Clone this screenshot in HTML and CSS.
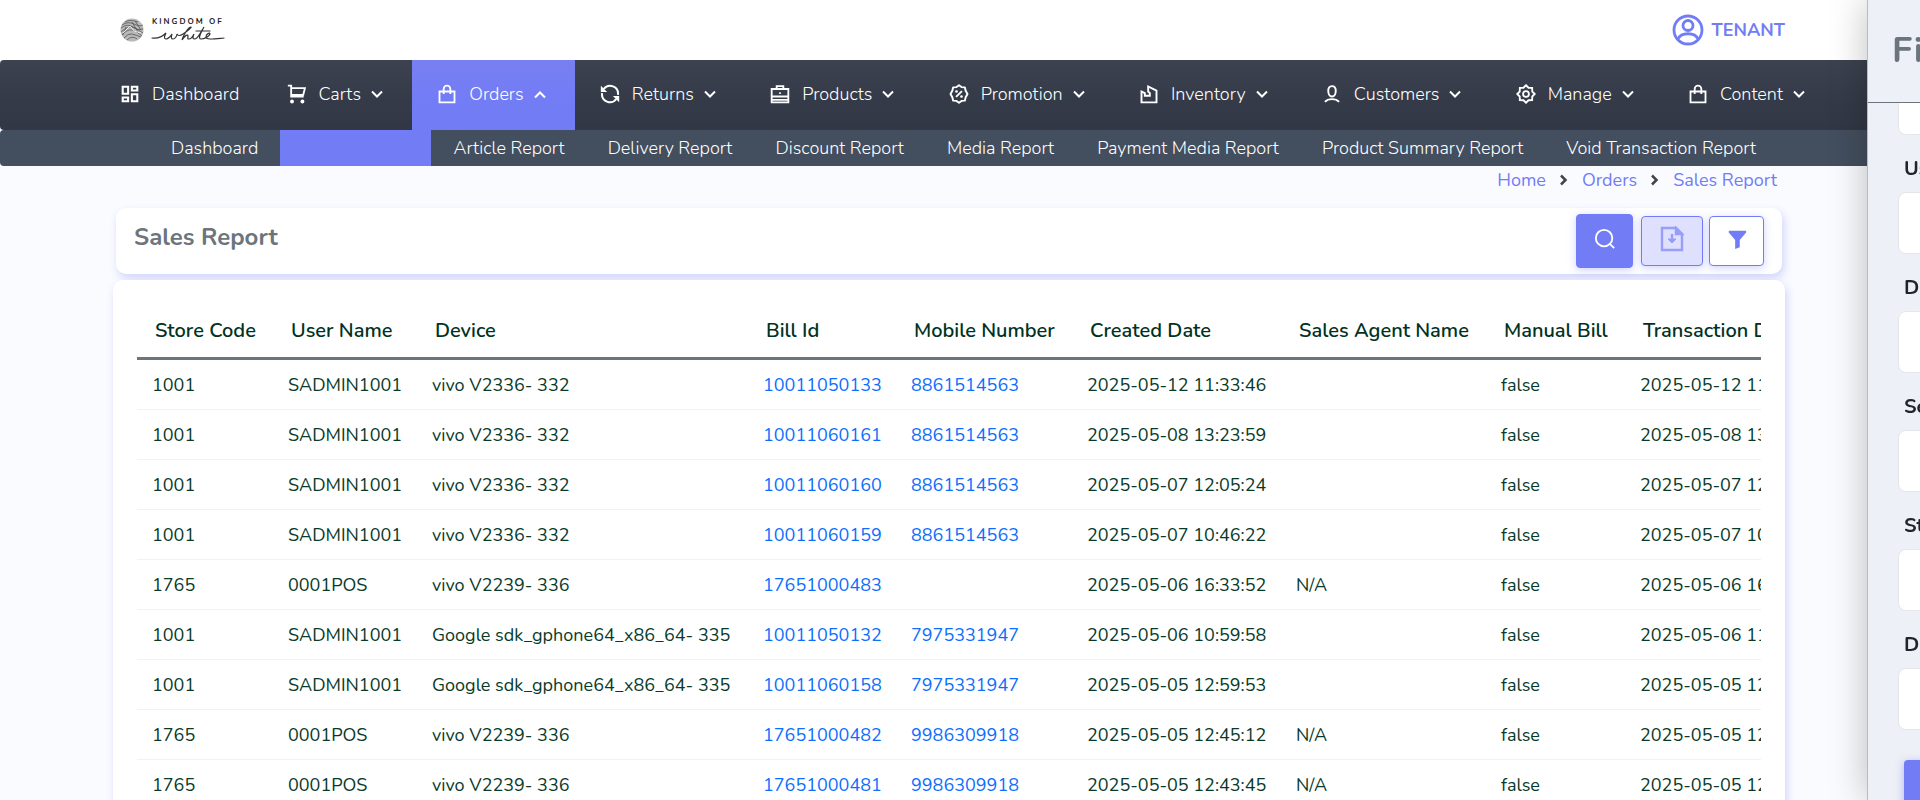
FILE: index.html
```html
<!DOCTYPE html>
<html lang="en">
<head>
<meta charset="utf-8">
<title>Sales Report</title>
<link rel="stylesheet" href="styles.css">
</head>
<body>
<svg class="sprite" aria-hidden="true">
  <symbol id="dash" viewBox="0 0 24 24"><path d="M2 2h9v11H2zM4.500 4.500v6h4v-6zM13 2h9v7h-9zM15.500 4.500v2h4v-2zM13 11h9v11h-9zM15.500 13.500v6h4v-6zM2 15h9v7H2zM4.500 17.500v2h4v-2z" fill="currentColor" fill-rule="evenodd"/></symbol>
  <symbol id="cart" viewBox="0 0 24 24"><path d="M1 2h4v13h15M5 5h16.500l-2 8H5" fill="none" stroke="currentColor" stroke-width="2.200"/><circle cx="6" cy="21" r="2.300" fill="currentColor"/><circle cx="18.500" cy="21" r="2.300" fill="currentColor"/></symbol>
  <symbol id="bag" viewBox="0 0 24 24"><path d="M3 9h18v13H3zM8 12V6a4 4 0 0 1 8 0v6" fill="none" stroke="currentColor" stroke-width="2.200"/></symbol>
  <symbol id="refresh" viewBox="0 0 24 24"><path d="M4.500 6a9.500 9.500 0 0 1 17 7M19.500 18a9.500 9.500 0 0 1-17-7" fill="none" stroke="currentColor" stroke-width="2.400"/><path d="M1 2v7.500h7.500zM23 22v-7.500h-7.500z" fill="currentColor"/></symbol>
  <symbol id="case" viewBox="0 0 24 24"><path d="M2 6h20v16H2zM8 6V2.500h8V6M2 15h20M2 19h20" fill="none" stroke="currentColor" stroke-width="2.200"/><path d="M11 10h2v2h-2z" fill="currentColor"/></symbol>
  <symbol id="promo" viewBox="0 0 24 24"><path d="M12 1.500l3 2.200 4 .3 1 4 2.200 4-2.200 4-1 4-4 .3-3 2.200-3-2.200-4-.3-1-4-2.200-4L4 8l1-4 4-.3zM8.500 15.500l7-7" fill="none" stroke="currentColor" stroke-width="2.300" stroke-linejoin="round"/><circle cx="9" cy="9" r="1.600" fill="currentColor"/><circle cx="15" cy="15" r="1.600" fill="currentColor"/></symbol>
  <symbol id="stock" viewBox="0 0 24 24"><path d="M3 22V9l4 2v3h6v-3l-2-2V3l10 5v14z" fill="none" stroke="currentColor" stroke-width="2.300"/></symbol>
  <symbol id="person" viewBox="0 0 24 24"><path d="M12 2.500c3 0 4.500 2 4.500 5.500S15 15 12 15s-4.500-3.500-4.500-7S9 2.500 12 2.500zM3.500 21.500c4-4.500 13-4.500 17 0" fill="none" stroke="currentColor" stroke-width="2.300"/></symbol>
  <symbol id="gear" viewBox="0 0 24 24"><path d="M12 1.500l3 3 4.400.1.100 4.400 3 3-3 3-.1 4.400-4.400.1-3 3-3-3-4.400-.1-.1-4.400-3-3 3-3 .1-4.400L9 4.500z" fill="none" stroke="currentColor" stroke-width="2.200"/><circle cx="12" cy="12" r="3.500" fill="none" stroke="currentColor" stroke-width="2.200"/></symbol>
  <symbol id="down" viewBox="0 0 12 12"><path d="M1 3.500l5 5 5-5" fill="none" stroke="currentColor" stroke-width="2"/></symbol>
  <symbol id="up" viewBox="0 0 12 12"><path d="M1 9.500l5-5 5 5" fill="none" stroke="currentColor" stroke-width="2"/></symbol>
  <symbol id="next" viewBox="0 0 12 12"><path d="M3 1.500L7.500 6 3 10.500" fill="none" stroke="currentColor" stroke-width="2.500"/></symbol>
</svg>

<header class="topbar">
  <a class="brand" href="#" aria-label="Kingdom of White">
    <svg class="brand-mark" viewBox="0 0 24 24" fill="none"><circle cx="12" cy="12" r="11.500" fill="#b9b9b9"/><g stroke="#555" stroke-width=".8"><path d="M2 7q6-4 12-1t9 1M1 10q7-5 12-1t10 2M1 14q7-6 11-5t11 6M2 17q5-6 10-5t10 6M4 20q4-5 8-4t9 3M7 22q5-5 10-1M5 4q5-3 13 0M6 9l-3 8M12 4l6 10M15 3l6 9"/></g><path d="M3 15l7-7 4 5 7 2" stroke="#eee"/></svg>
    <span class="brand-text"><span class="brand-top">KINGDOM OF</span>
    <svg class="brand-script" viewBox="0 0 76 16" fill="none" stroke="#333" stroke-width="1.200" stroke-linecap="round"><path d="M1 12c6 1 10-1 14-5-2 4-2 6 0 6s5-3 6-5c-1 3-1 5 1 5s4-3 4-5c1 2 3 2 6 0 5-3 9-7 8-7-3 0-8 9-9 13 3-5 6-6 6-4s-1 3 1 3 4-3 5-5c-2 4-1 5 1 5 3 0 7-9 9-12-4 7-6 12-3 12 3 0 8-2 9-5 0-2-4 0-4 3s7 2 18 1M45 5h14"/></svg></span>
  </a>
  <a class="account" href="#">
    <svg class="account-icon" viewBox="0 0 32 32" fill="none" stroke="currentColor" stroke-width="2.800"><circle cx="16" cy="16" r="14"/><circle cx="16" cy="11.500" r="5"/><path d="M6 25c3-7 17-7 20 0"/></svg>
    TENANT
  </a>
</header>

<nav class="mainnav" aria-label="Main">
  <a class="nav-item" href="#"><svg class="icon"><use href="#dash"/></svg>Dashboard</a>
  <a class="nav-item" href="#"><svg class="icon"><use href="#cart"/></svg>Carts<svg class="chev"><use href="#down"/></svg></a>
  <a class="nav-item active" href="#"><svg class="icon"><use href="#bag"/></svg>Orders<svg class="chev"><use href="#up"/></svg></a>
  <a class="nav-item" href="#"><svg class="icon"><use href="#refresh"/></svg>Returns<svg class="chev"><use href="#down"/></svg></a>
  <a class="nav-item" href="#"><svg class="icon"><use href="#case"/></svg>Products<svg class="chev"><use href="#down"/></svg></a>
  <a class="nav-item" href="#"><svg class="icon"><use href="#promo"/></svg>Promotion<svg class="chev"><use href="#down"/></svg></a>
  <a class="nav-item" href="#"><svg class="icon"><use href="#stock"/></svg>Inventory<svg class="chev"><use href="#down"/></svg></a>
  <a class="nav-item" href="#"><svg class="icon"><use href="#person"/></svg>Customers<svg class="chev"><use href="#down"/></svg></a>
  <a class="nav-item" href="#"><svg class="icon"><use href="#gear"/></svg>Manage<svg class="chev"><use href="#down"/></svg></a>
  <a class="nav-item" href="#"><svg class="icon"><use href="#bag"/></svg>Content<svg class="chev"><use href="#down"/></svg></a>
</nav>
<nav class="subnav" aria-label="Orders">
  <a class="sub-item" href="#">Dashboard</a>
  <a class="sub-item current" href="#" aria-label="Sales Report"></a>
  <a class="sub-item" href="#">Article Report</a>
  <a class="sub-item" href="#">Delivery Report</a>
  <a class="sub-item" href="#">Discount Report</a>
  <a class="sub-item" href="#">Media Report</a>
  <a class="sub-item" href="#">Payment Media Report</a>
  <a class="sub-item" href="#">Product Summary Report</a>
  <a class="sub-item" href="#">Void Transaction Report</a>
</nav>

<main class="page">
  <nav class="crumbs" aria-label="Breadcrumb">
    <a href="#">Home</a><svg class="sep"><use href="#next"/></svg>
    <a href="#">Orders</a><svg class="sep"><use href="#next"/></svg>
    <a href="#">Sales Report</a>
  </nav>

  <section class="titlebar">
    <h1>Sales Report</h1>
    <div class="actions">
      <button class="btn primary" aria-label="Search"><svg class="btn-icon" viewBox="0 0 24 24" fill="none" stroke="currentColor" stroke-width="2"><circle cx="11" cy="11" r="9"/><path d="M17 17l5 5"/></svg></button>
      <button class="btn export" disabled aria-label="Export"><svg class="btn-icon large" viewBox="0 0 24 26" fill="none" stroke="currentColor" stroke-width="2.400"><path d="M2 2h14l6 6v16H2z"/><path d="M16 2l6 6h-6z" fill="currentColor"/><path d="M12 8v6"/><path d="M8 13h8l-4 4z" fill="currentColor" stroke-width="1"/></svg></button>
      <button class="btn" aria-label="Filter"><svg class="btn-icon" viewBox="0 0 24 24" fill="currentColor"><path d="M3 3h19v2l-7 8v8l-5 2V13L3 5z"/></svg></button>
    </div>
  </section>

  <section class="report">
    <div class="table-wrap">
      <table>
        <colgroup><col class="c-store"><col class="c-user"><col class="c-device"><col class="c-bill"><col class="c-mobile"><col class="c-created"><col class="c-agent"><col class="c-manual"><col class="c-date"></colgroup>
        <thead><tr><th>Store Code</th><th>User Name</th><th>Device</th><th>Bill Id</th><th>Mobile Number</th><th>Created Date</th><th>Sales Agent Name</th><th>Manual Bill</th><th>Transaction Date</th></tr></thead>
        <tbody>
          <tr><td>1001</td><td>SADMIN1001</td><td>vivo V2336- 332</td><td><a href="#">10011050133</a></td><td><a href="#">8861514563</a></td><td>2025-05-12 11:33:46</td><td></td><td>false</td><td>2025-05-12 11:33:46</td></tr>
          <tr><td>1001</td><td>SADMIN1001</td><td>vivo V2336- 332</td><td><a href="#">10011060161</a></td><td><a href="#">8861514563</a></td><td>2025-05-08 13:23:59</td><td></td><td>false</td><td>2025-05-08 13:23:59</td></tr>
          <tr><td>1001</td><td>SADMIN1001</td><td>vivo V2336- 332</td><td><a href="#">10011060160</a></td><td><a href="#">8861514563</a></td><td>2025-05-07 12:05:24</td><td></td><td>false</td><td>2025-05-07 12:05:24</td></tr>
          <tr><td>1001</td><td>SADMIN1001</td><td>vivo V2336- 332</td><td><a href="#">10011060159</a></td><td><a href="#">8861514563</a></td><td>2025-05-07 10:46:22</td><td></td><td>false</td><td>2025-05-07 10:46:22</td></tr>
          <tr><td>1765</td><td>0001POS</td><td>vivo V2239- 336</td><td><a href="#">17651000483</a></td><td></td><td>2025-05-06 16:33:52</td><td>N/A</td><td>false</td><td>2025-05-06 16:33:52</td></tr>
          <tr><td>1001</td><td>SADMIN1001</td><td>Google sdk_gphone64_x86_64- 335</td><td><a href="#">10011050132</a></td><td><a href="#">7975331947</a></td><td>2025-05-06 10:59:58</td><td></td><td>false</td><td>2025-05-06 11:00:02</td></tr>
          <tr><td>1001</td><td>SADMIN1001</td><td>Google sdk_gphone64_x86_64- 335</td><td><a href="#">10011060158</a></td><td><a href="#">7975331947</a></td><td>2025-05-05 12:59:53</td><td></td><td>false</td><td>2025-05-05 12:59:53</td></tr>
          <tr><td>1765</td><td>0001POS</td><td>vivo V2239- 336</td><td><a href="#">17651000482</a></td><td><a href="#">9986309918</a></td><td>2025-05-05 12:45:12</td><td>N/A</td><td>false</td><td>2025-05-05 12:45:12</td></tr>
          <tr><td>1765</td><td>0001POS</td><td>vivo V2239- 336</td><td><a href="#">17651000481</a></td><td><a href="#">9986309918</a></td><td>2025-05-05 12:43:45</td><td>N/A</td><td>false</td><td>2025-05-05 12:43:45</td></tr>
        </tbody>
      </table>
    </div>
  </section>
</main>

<aside class="drawer" aria-label="Filter">
  <h2>Filter</h2>
  <form class="fields">
    <input class="field" type="text" aria-label="Store" placeholder="Select">
    <label for="f-user">User Name</label><input class="field" id="f-user" type="text" placeholder="Select">
    <label for="f-device">Device</label><input class="field" id="f-device" type="text" placeholder="Select">
    <label for="f-search">Search</label><input class="field" id="f-search" type="text" placeholder="Select">
    <label for="f-status">Status</label><input class="field" id="f-status" type="text" placeholder="Select">
    <label for="f-date">Date</label><input class="field" id="f-date" type="text" placeholder="Select">
    <button class="apply" type="button">Apply</button>
  </form>
</aside>
</body>
</html>
```
FILE: styles.css
```css
* { box-sizing: border-box; }
html { overflow: hidden; }
body {
  margin: 0;
  background: #fafbff;
  color: #00331f;
  font-family: Nunito, Lato, "Open Sans", sans-serif;
  font-size: 18px;
  line-height: 24px;
}
a { color: inherit; text-decoration: none; }
.sprite { position: absolute; width: 0; height: 0; }

.topbar {
  display: flex;
  align-items: center;
  justify-content: space-between;
  height: 60px;
  padding: 0 135px 0 120px;
  background: #fff;
}
.brand { display: flex; align-items: center; gap: 6px; color: #222; }
.brand-mark { width: 24px; height: 24px; }
.brand-text { display: flex; flex-direction: column; }
.brand-top { padding-left: 2px; font-size: 8px; font-weight: 700; line-height: 8px; letter-spacing: 2px; }
.brand-script { width: 78px; height: 16px; }
.account { display: flex; align-items: center; gap: 8px; color: #727cf5; font-weight: 700; }
.account-icon { width: 32px; height: 32px; }

.mainnav {
  display: flex;
  justify-content: space-between;
  padding: 0 86px 0 96px;
  height: 70px;
  border-radius: 4px;
  background: linear-gradient(#3c424f, #343a47 60%, #313744);
  color: #fff;
  font-weight: 300;
}
.nav-item { display: flex; align-items: center; padding: 0 29px 2px 25px; white-space: nowrap; }
.nav-item:first-child { padding-right: 22px; padding-left: 24px; }
.active { background: linear-gradient(#787ff2, #727cf5 60%); }
.icon { width: 20px; height: 20px; margin-right: 12px; }
.chev { width: 12px; height: 12px; margin-left: 10px; }

.subnav {
  display: flex;
  justify-content: space-between;
  height: 36px;
  padding: 0 143px 0 150px;
  border-radius: 4px;
  background: #434e5e;
  color: #fff;
  font-weight: 300;
}
.sub-item { display: flex; flex: none; align-items: center; padding: 0 21px; white-space: nowrap; }
.current { width: 151px; background: #727cf5; }

.page { padding: 0 135px 0 113px; }
.crumbs {
  display: flex;
  align-items: center;
  justify-content: flex-end;
  gap: 12px;
  height: 28px;
  margin: 0 8px 14px;
  color: #727cf5;
}
.sep { width: 12px; height: 12px; color: #444; }

.titlebar {
  display: flex;
  justify-content: space-between;
  height: 66px;
  margin: 0 3px 6px;
  padding: 6px 18px;
  border-radius: 10px;
  background: #fff;
  box-shadow: 2px 4px 8px rgba(114, 124, 245, .3);
}
h1 { margin: 8px 0 0; color: #6c757d; font-size: 24px; line-height: 30px; font-weight: 700; }
.actions { display: flex; align-items: center; gap: 6px; }
.btn {
  display: flex;
  align-items: center;
  justify-content: center;
  width: 55px;
  height: 50px;
  padding: 0 0 4px;
  border: 1px solid #727cf5;
  border-radius: 4px;
  background: #fff;
  color: #727cf5;
  box-shadow: 0 2px 8px rgba(114, 124, 245, .35);
}
.primary { width: 57px; height: 54px; margin-right: 2px; background: #727cf5; color: #fff; }
.export { width: 62px; background: #dfe0fd; color: #979efa; }
.btn-icon { flex: none; width: 22px; height: 22px; }
.large { width: 24px; height: 26px; }

.report {
  padding: 24px;
  border-radius: 10px;
  background: #fff;
  box-shadow: 2px 4px 8px rgba(114, 124, 245, .3);
}
.table-wrap { overflow: hidden; }
table { width: 1708px; table-layout: fixed; border-spacing: 0; }
.c-store { width: 136px; }
.c-user { width: 144px; }
.c-device { width: 331px; }
.c-bill { width: 148px; }
.c-mobile { width: 176px; }
.c-created { width: 209px; }
.c-agent { width: 205px; }
.c-manual { width: 139px; }
.c-date { width: 220px; }
th, td { padding: 0 0 0 15px; text-align: left; white-space: nowrap; }
th { height: 56px; padding: 0 0 0 18px; border-bottom: 3px solid #6c757d; font-size: 20px; font-weight: 600; }
td { height: 50px; border-bottom: 1px solid #f1f2f6; color: #083a29; }
td a { color: #0d6efd; }

.drawer {
  position: fixed;
  top: 0;
  bottom: 0;
  left: calc(100% - 53px);
  width: 400px;
  border-left: 1px solid #bbb;
  background: #edf0f6;
  box-shadow: 0 0 35px rgba(0, 0, 0, .25);
  color: #212529;
}
h2 { margin: 0; padding: 32px 24px; border-bottom: 1px solid #6c757d; color: #6c757d; font-size: 36px; line-height: 38px; }
.fields { display: flex; flex-direction: column; padding: 0 30px; }
.field {
  height: 62px;
  padding: 0 20px;
  border: 1px solid #e4e6ea;
  border-radius: 8px;
  background: #fff;
  font: inherit;
}
.field::placeholder { color: #ced4da; }
.field:first-child { height: 32px; border-top: 0; border-radius: 0 0 8px 8px; }
label { padding: 22px 6px 11px; font-size: 20px; line-height: 24px; font-weight: 700; }
.apply { width: 120px; height: 50px; margin: 30px 6px; border: 0; border-radius: 4px; background: #727cf5; color: #fff; font: inherit; box-shadow: 0 2px 8px rgba(114, 124, 245, .5); }
```
